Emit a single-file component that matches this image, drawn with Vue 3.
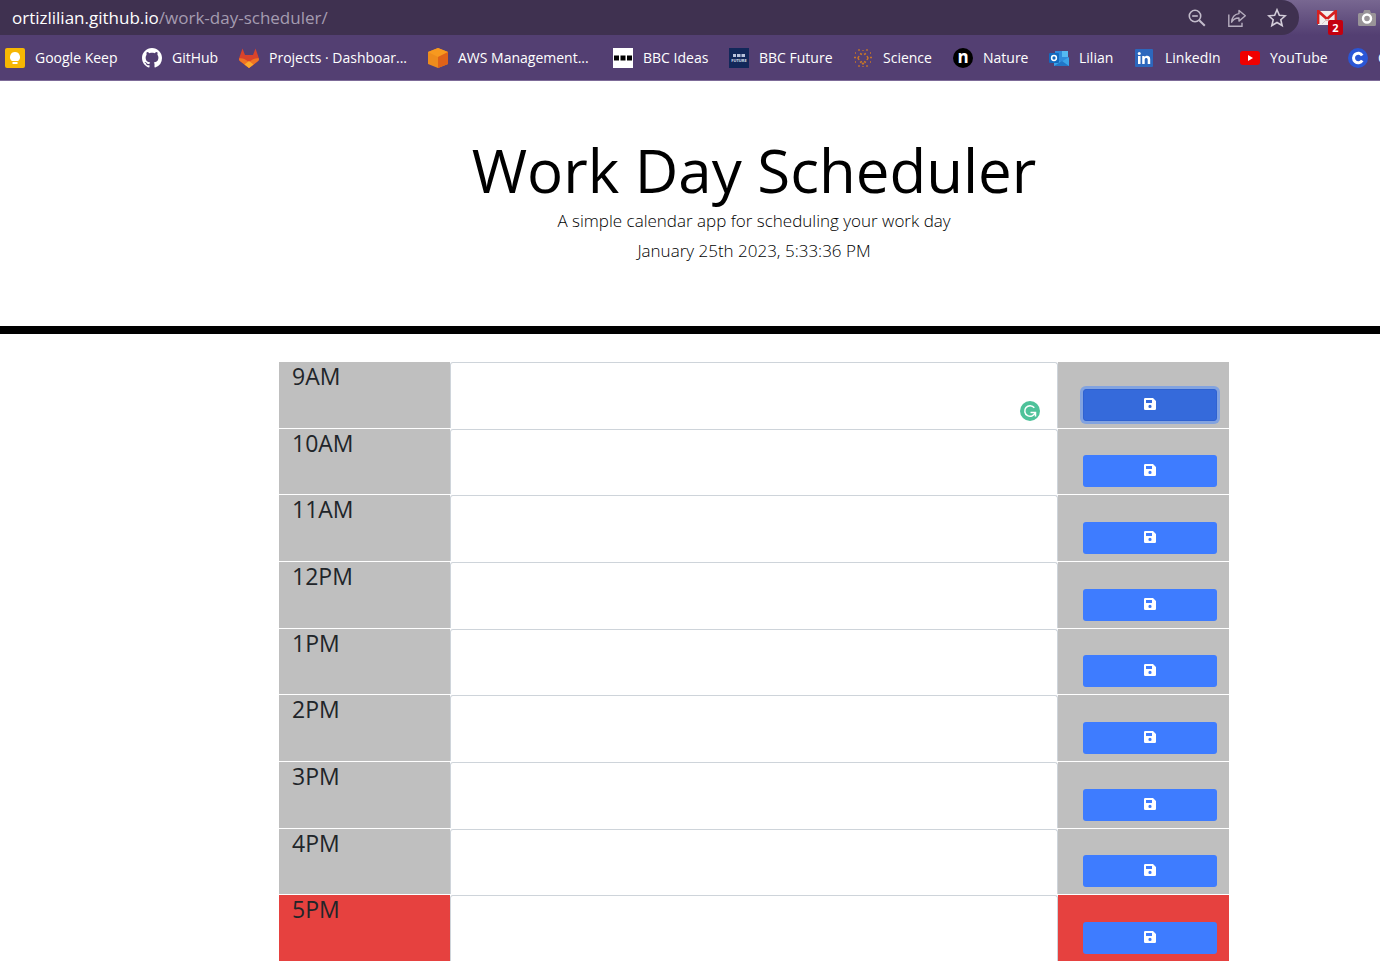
<script setup>
import { ref } from 'vue'

const bookmarks = [
  { icon: 'keep', label: 'Google Keep' },
  { icon: 'github', label: 'GitHub' },
  { icon: 'gitlab', label: 'Projects · Dashboar...' },
  { icon: 'aws', label: 'AWS Management...' },
  { icon: 'ideas', label: 'BBC Ideas' },
  { icon: 'future', label: 'BBC Future' },
  { icon: 'science', label: 'Science' },
  { icon: 'nature', label: 'Nature' },
  { icon: 'outlook', label: 'Lilian' },
  { icon: 'linkedin', label: 'LinkedIn' },
  { icon: 'youtube', label: 'YouTube' },
  { icon: 'coursera', label: 'C' }
]

const hours = ref(
  ['9AM', '10AM', '11AM', '12PM', '1PM', '2PM', '3PM', '4PM', '5PM'].map((label, i) => ({
    label,
    text: '',
    state: i === 8 ? 'present' : 'past',
    focused: i === 0
  }))
)
</script>

<template>
  <div class="browser">
    <div class="toolbar">
      <div class="address">
        <a class="url" href="#"><span class="host">ortizlilian.github.io</span>/work-day-scheduler/</a>
        <div class="actions">
          <button class="tool" type="button" aria-label="Zoom">
            <svg width="20" height="20" viewBox="0 0 20 20" fill="none" stroke="#c3bccb" stroke-width="1.6">
              <circle cx="8" cy="8" r="5.7" /><path d="M5.2 8h5.6" /><path d="M12.2 12.2l5.6 5.6" stroke-width="2" />
            </svg>
          </button>
          <button class="tool" type="button" aria-label="Share">
            <svg width="20" height="20" viewBox="0 0 20 20" fill="none" stroke="#b5adbe" stroke-width="1.4">
              <path d="M1.8 6.5V18.2H15V14.8" />
              <path d="M12 2.500l6.300 5.300-6.300 5.300V10C8.400 9.900 6 11.400 4.600 14.200 4.900 9.500 7.500 6.200 12 5.600z" stroke-linejoin="round" />
            </svg>
          </button>
          <button class="tool" type="button" aria-label="Bookmark this page">
            <svg width="20" height="20" viewBox="0 0 20 20" fill="none" stroke="#d3cdd9" stroke-width="1.6">
              <path d="M10 1.800l2.350 5.500 5.950.5-4.500 3.950 1.350 5.750L10 14.450 4.850 17.500l1.350-5.750-4.500-3.950 5.950-.5z" />
            </svg>
          </button>
        </div>
      </div>
      <div class="extensions">
        <button class="extension gmail" type="button" aria-label="Mail, 2 unread">
          <svg width="20" height="16" viewBox="0 0 20 16">
            <rect x="1" y="1" width="18" height="14" fill="#f1eeee" />
            <path d="M1 14V1l9 8 9-8v13" fill="none" stroke="#d52020" stroke-width="2.800" />
            <path d="M5 14l5-5 5 5" fill="none" stroke="#d8cccc" stroke-width="1" />
          </svg>
          <span class="badge">2</span>
        </button>
        <button class="extension" type="button" aria-label="Screenshot">
          <svg width="20" height="18" viewBox="0 0 20 18">
            <path d="M2.500 4H6l1.200-3h5.600L14 4h3.500A1.500 1.500 0 0 1 19 5.500v10a1.500 1.500 0 0 1-1.500 1.500h-15A1.500 1.500 0 0 1 1 15.500v-10A1.500 1.500 0 0 1 2.500 4z" fill="#999498" />
            <circle cx="10" cy="9.500" r="4" fill="#999498" stroke="#fff" stroke-width="2.400" />
          </svg>
        </button>
      </div>
    </div>

    <nav class="bookmarks" aria-label="Bookmarks">
      <a v-for="b in bookmarks" :key="b.icon" class="bookmark" href="#">
        <svg v-if="b.icon === 'keep'" width="20" height="20" viewBox="0 0 20 20">
          <rect width="20" height="20" rx="2" fill="#f6b704" />
          <path d="M10 4a5 5 0 0 0-3 9h6a5 5 0 0 0-3-9zM7.500 14h5v2h-5z" fill="#fff" />
        </svg>
        <svg v-else-if="b.icon === 'github'" width="20" height="20" viewBox="0 0 16 16">
          <path fill="#fff" d="M8 0C3.580 0 0 3.580 0 8c0 3.540 2.290 6.530 5.470 7.590.4.070.55-.17.55-.38 0-.19-.01-.82-.01-1.490-2.010.37-2.530-.49-2.690-.94-.09-.23-.48-.94-.82-1.130-.28-.15-.68-.52-.01-.53.63-.01 1.080.58 1.230.82.72 1.210 1.870.87 2.330.66.070-.52.28-.87.51-1.070-1.780-.2-3.640-.89-3.640-3.950 0-.87.31-1.590.82-2.150-.08-.2-.36-1.020.080-2.120 0 0 .67-.21 2.200.82.64-.18 1.320-.27 2-.27s1.360.090 2 .27c1.530-1.040 2.200-.82 2.200-.82.44 1.100.16 1.920.080 2.120.51.56.82 1.270.82 2.150 0 3.070-1.870 3.750-3.650 3.950.29.25.54.73.54 1.480 0 1.070-.01 1.930-.01 2.200 0 .21.15.46.55.38A8.010 8.010 0 0 0 16 8c0-4.420-3.580-8-8-8z" />
        </svg>
        <svg v-else-if="b.icon === 'gitlab'" width="20" height="20" viewBox="0 0 20 20">
          <path d="M3.500 0.500L6 7h8L16.500.5l3.300 9.500c.5 1.500 0 2.500-1 3.300L10 20 1.200 13.300c-1-.8-1.500-1.800-1-3.300z" fill="#d9432b" />
          <path d="M0 10.500C3 9.800 5 10.500 10 14c5-3.500 7-4.200 10-3.500.1 1.200-.3 2-1.200 2.800L10 20l-8.800-6.700C.3 12.500-.1 11.700 0 10.500z" fill="#ef7424" />
          <path d="M5.500 16.500L10 13l4.500 3.500L10 20z" fill="#fba92c" />
        </svg>
        <svg v-else-if="b.icon === 'aws'" width="20" height="20" viewBox="0 0 20 20">
          <path d="M10 0l10 4v12l-10 4L0 16V4z" fill="#ee8c1c" />
          <path d="M10 0l10 4-10 5L0 4z" fill="#f7991f" />
          <path d="M10 9l10-5v12l-10 4z" fill="#df6218" />
        </svg>
        <svg v-else-if="b.icon === 'ideas'" width="20" height="20" viewBox="0 0 20 20">
          <rect width="20" height="20" fill="#fff" />
          <path d="M1 7.500h5v5H1zM7.500 7.500h5v5h-5zM14 7.500h5v5h-5z" fill="#000" />
        </svg>
        <svg v-else-if="b.icon === 'future'" width="20" height="20" viewBox="0 0 20 20">
          <rect width="20" height="20" fill="#12285a" />
          <path d="M4 6h3v3H4zM8 6h3.500v3H8zM12.500 6H16v3h-3.500z" fill="#b9c3dc" />
          <text x="10" y="14" text-anchor="middle" font-size="4" font-weight="700" fill="#dce2f0">FUTURE</text>
        </svg>
        <svg v-else-if="b.icon === 'science'" width="20" height="20" viewBox="0 0 20 20" fill="none" stroke="#c77628">
          <path d="M7 5.500l2 1M11 6.500l2-1M14 8l1 2-1 2M13 14.500l-2-1M9 13.500l-2 1M6 12l-1-2 1-2M9 15l1 1 1-1" stroke-width="1.500" />
          <path d="M6 1v2M14 1v2M10 2v1M1 9.500h2M17 9.500h2M2 5h1M17 5h1M2 14h1M17 14h1M6 17v2M14 17v2M10 18v1" stroke-width="1.300" />
        </svg>
        <svg v-else-if="b.icon === 'nature'" class="nature" width="20" height="20" viewBox="0 0 20 20">
          <circle cx="10" cy="10" r="10" fill="#000" />
          <text x="10" y="15" text-anchor="middle" font-size="17" font-weight="700" fill="#fff">n</text>
        </svg>
        <svg v-else-if="b.icon === 'outlook'" width="20" height="20" viewBox="0 0 20 20">
          <path d="M6 3h13v12H6z" fill="#2f8bdc" />
          <path d="M13 3h6v6h-6z" fill="#55b9f2" />
          <path d="M5 10l7 4 8-5v9H5z" fill="#3ba3e8" />
          <path d="M5 18l8-5 7 5z" fill="#2176c7" />
          <rect y="5" width="10" height="10" rx="1" fill="#1469bd" />
          <circle cx="5" cy="10" r="2.400" fill="none" stroke="#fff" stroke-width="1.500" />
        </svg>
        <svg v-else-if="b.icon === 'linkedin'" width="20" height="20" viewBox="0 0 20 20">
          <rect x="0" y="1" width="18" height="18" rx="1" fill="#2c67bd" />
          <path d="M3 8h2.500v8H3zM7.200 8h2.400v1.200c1.400-2.200 5.600-1.800 5.600 2V16h-2.500v-4.300c0-2.200-3-2.200-3 0V16H7.200z" fill="#fff" />
          <circle cx="4.250" cy="5.400" r="1.500" fill="#fff" />
        </svg>
        <svg v-else-if="b.icon === 'youtube'" width="20" height="20" viewBox="0 0 20 20">
          <rect y="3" width="20" height="14" rx="3" fill="#f00000" />
          <path d="M8 7l5 3-5 3z" fill="#fff" />
        </svg>
        <svg v-else width="20" height="20" viewBox="0 0 20 20">
          <circle cx="10" cy="10" r="10" fill="#2a56d6" />
          <path d="M14.200 7.500a4.700 4.700 0 1 0 0 5" fill="none" stroke="#fff" stroke-width="3" />
        </svg>
        <span>{{ b.label }}</span>
      </a>
    </nav>
  </div>

  <header class="hero">
    <h1>Work Day Scheduler</h1>
    <p>A simple calendar app for scheduling your work day</p>
    <p>January 25th 2023, 5:33:36 PM</p>
  </header>

  <main class="planner">
    <form class="schedule" @submit.prevent>
      <div v-for="(h, i) in hours" :key="h.label" class="row" :class="h.state">
        <label class="hour" :for="'hour-' + i">{{ h.label }}</label>
        <div class="entry">
          <textarea :id="'hour-' + i" v-model="h.text"></textarea>
          <svg v-if="h.focused" class="assistant" width="20" height="20" viewBox="0 0 20 20">
            <circle cx="10" cy="10" r="10" fill="#4ec29a" />
            <path d="M14.300 6.800a5.300 5.300 0 1 0 .9 4.600" fill="none" stroke="#fff" stroke-width="1.500" />
            <path d="M10.500 11.400h5v4" fill="none" stroke="#fff" stroke-width="1.500" />
          </svg>
        </div>
        <div class="save-cell">
          <button class="save" :class="{ active: h.focused }" type="submit" :aria-label="'Save ' + h.label">
            <svg width="12" height="12" viewBox="0 0 12 12">
              <path fill="#fff" fill-rule="evenodd" d="M1.200 0H9l3 3v7.800A1.200 1.200 0 0 1 10.800 12H1.200A1.200 1.200 0 0 1 0 10.800V1.200A1.200 1.200 0 0 1 1.200 0zM2 2v3h6V2zM6 6.800a1.600 1.600 0 1 0 0 3.200 1.600 1.600 0 0 0 0-3.200z" />
            </svg>
          </button>
        </div>
      </div>
    </form>
  </main>
</template>

<style>
body {
  background: #fff;
  overflow: hidden;
}
</style>

<style scoped>
* {
  box-sizing: border-box;
}
button {
  margin: 0;
  padding: 0;
  border: 0;
  background: none;
  cursor: pointer;
}
svg {
  display: block;
  flex: none;
}
.browser,
.hero,
.planner {
  font-family: "Open Sans", "Noto Sans", sans-serif;
}
.browser {
  background: #533f72;
  border-bottom: 1px solid #7d6b98;
  overflow: hidden;
}
.toolbar {
  display: flex;
  height: 35px;
  background: linear-gradient(#786791, #533f72);
}
.address {
  display: flex;
  flex: 1;
  align-items: center;
  justify-content: space-between;
  padding: 0 12px;
  border-radius: 0 18px 18px 0;
  background: #3f3150;
}
.url {
  font-size: 17px;
  color: #a59cb0;
  text-decoration: none;
}
.host {
  color: #fff;
}
.actions {
  display: flex;
  gap: 20px;
}
.extensions {
  display: flex;
  align-items: center;
  gap: 20px;
  width: 81px;
  padding-left: 18px;
}
.extension {
  position: relative;
}
.badge {
  position: absolute;
  left: 11px;
  top: 10px;
  width: 15px;
  height: 15px;
  border-radius: 2px;
  background: #c4000f;
  color: #fff;
  font: 700 11px/15px "Open Sans", sans-serif;
}
.bookmarks {
  display: grid;
  grid-template-columns: 137px 97px 189px 185px 116px 124px 100px 96px 86px 105px 108px 60px;
  align-items: center;
  height: 45px;
  padding-left: 5px;
}
.bookmark {
  display: flex;
  align-items: center;
  gap: 10px;
  color: #fff;
  font-size: 14px;
  line-height: 20px;
  white-space: nowrap;
  text-decoration: none;
}
.nature {
  overflow: visible;
}
.hero {
  padding: 57px 0 60px 128px;
  border-bottom: 8px solid #000;
  color: #000;
  text-align: center;
}
.hero h1 {
  margin: 0 0 3px;
  font-size: 60px;
  font-weight: 400;
  line-height: 65px;
}
.hero p {
  margin: 0;
  font-size: 17px;
  font-weight: 350;
  line-height: 30px;
}
.planner {
  padding: 27px 0 0 128px;
}
.schedule {
  display: grid;
  grid-auto-rows: 1fr;
  min-height: 600px;
  max-width: 950px;
  margin: 0 auto;
}
.row {
  display: grid;
  grid-template-columns: 18% 64% 18%;
  border-top: 1px solid #fff;
  background: #bfbfbf;
}
.row.present {
  background: #e6413f;
}
.hour {
  padding-left: 13px;
  color: #212529;
  font-size: 23px;
  line-height: 28px;
}
.entry {
  position: relative;
  display: flex;
  background: #fff;
}
.entry textarea {
  width: 100%;
  height: 100%;
  margin: 0;
  padding: 6px 12px;
  border: 1px solid #ced4da;
  border-bottom: 0;
  border-radius: 3px 3px 0 0;
  background: #fff;
  font: 16px/24px "Open Sans", sans-serif;
  resize: none;
  outline: 0;
}
.assistant {
  position: absolute;
  right: 18px;
  bottom: 7px;
}
.save-cell {
  display: flex;
  align-items: flex-end;
  padding: 0 12px 7px 25px;
}
.save {
  display: flex;
  flex: 1;
  align-items: center;
  justify-content: center;
  height: 32px;
  padding-bottom: 2px;
  border-radius: 3px;
  background: #3e7cff;
}
.save.active {
  border: 1px solid #2f62d1;
  background: #356adb;
  box-shadow: 0 0 0 3px #82a3e0;
}
</style>
